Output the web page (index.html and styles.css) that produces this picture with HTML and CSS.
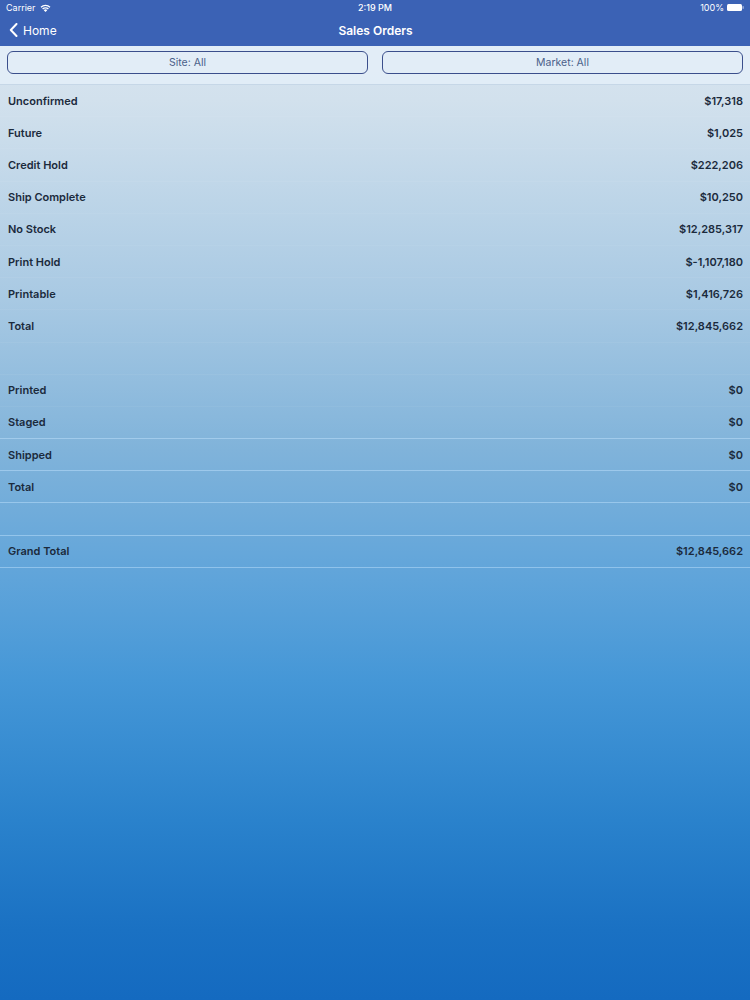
FILE: index.html
```html
<!doctype html>
<html lang="en">
  <head>
    <meta charset="UTF-8" />
    <meta name="viewport" content="width=device-width, initial-scale=1.0" />
    <title>Sales Orders</title>
    <link rel="stylesheet" href="styles.css">
  </head>
  <body>
    <div class="top-bar">
      <div class="status-bar">
        <div class="status-left">
          Carrier
          <svg class="wifi" width="11" height="8" viewBox="0 0 11 8">
            <path d="M5.5 8 L3.8 6.2 A2.4 2.4 0 0 1 7.2 6.2 Z" fill="#fff" />
            <path d="M2.6 5 A4.1 4.1 0 0 1 8.4 5" stroke="#fff" stroke-width="1.3" fill="none" />
            <path d="M1 3.3 A6.4 6.4 0 0 1 10 3.3" stroke="#fff" stroke-width="1.3" fill="none" />
          </svg>
        </div>
        <div class="status-time">2:19 PM</div>
        <div class="status-right">
          100%
          <svg class="battery" width="17" height="7" viewBox="0 0 17 7">
            <rect x="0" y="0" width="15" height="7" rx="1.5" fill="#fff" />
            <rect x="15.5" y="2.2" width="1.2" height="2.6" fill="#fff" opacity="0.6" />
          </svg>
        </div>
      </div>
      <div class="nav-bar">
        <div class="nav-back">
          <svg width="9" height="14" viewBox="0 0 9 14">
            <path d="M7.5 1 L1.8 7 L7.5 13" stroke="#fff" stroke-width="2" fill="none" stroke-linecap="round" stroke-linejoin="round" />
          </svg>
          <span>Home</span>
        </div>
        <div class="nav-title">Sales Orders</div>
        <div class="nav-spacer"></div>
      </div>
    </div>

    <div class="filter-bar">
      <button class="filter-button">Site: All</button>
      <button class="filter-button">Market: All</button>
    </div>

    <div class="order-list">
      <div class="order-row"><span>Unconfirmed</span><span>$17,318</span></div>
      <div class="order-row"><span>Future</span><span>$1,025</span></div>
      <div class="order-row"><span>Credit Hold</span><span>$222,206</span></div>
      <div class="order-row"><span>Ship Complete</span><span>$10,250</span></div>
      <div class="order-row"><span>No Stock</span><span>$12,285,317</span></div>
      <div class="order-row"><span>Print Hold</span><span>$-1,107,180</span></div>
      <div class="order-row"><span>Printable</span><span>$1,416,726</span></div>
      <div class="order-row"><span>Total</span><span>$12,845,662</span></div>
      <div class="order-row"></div>
      <div class="order-row"><span>Printed</span><span>$0</span></div>
      <div class="order-row"><span>Staged</span><span>$0</span></div>
      <div class="order-row"><span>Shipped</span><span>$0</span></div>
      <div class="order-row"><span>Total</span><span>$0</span></div>
      <div class="order-row"></div>
      <div class="order-row"><span>Grand Total</span><span>$12,845,662</span></div>
    </div>
  </body>
</html>
```

FILE: styles.css
```css
* {
  box-sizing: border-box;
  margin: 0;
  padding: 0;
  font-family: Inter, 'Liberation Sans', sans-serif;
}

html,
body {
  width: 750px;
  height: 1000px;
  overflow: hidden;
}

body {
  background: linear-gradient(
    to bottom,
    #dce7f1 0px,
    #d2e1ed 100px,
    #a8c9e3 300px,
    #80b3da 450px,
    #5fa4da 580px,
    #4597d7 680px,
    #2a82cc 820px,
    #1a71c3 930px,
    #146ac0 1000px
  );
  color: #1b2a3c;
}

.top-bar {
  background-color: #3b62b5;
  color: #fff;
}

.status-bar {
  height: 15px;
  display: flex;
  justify-content: space-between;
  align-items: center;
  padding: 0 6px;
  font-size: 9px;
}

.status-left,
.status-right {
  display: flex;
  align-items: center;
  gap: 4px;
  width: 80px;
}

.status-right {
  justify-content: flex-end;
  gap: 3px;
}

.status-time {
  font-weight: 500;
}

.nav-bar {
  height: 31px;
  display: flex;
  justify-content: space-between;
  align-items: center;
  padding: 0 8px 1px 9px;
}

.nav-back {
  display: flex;
  align-items: center;
  gap: 5px;
  font-size: 12px;
  width: 80px;
}

.nav-title {
  font-size: 12px;
  font-weight: 600;
}

.nav-spacer {
  width: 80px;
}

.filter-bar {
  height: 39px;
  display: flex;
  gap: 14px;
  padding: 5px 7px 0;
  background-color: rgba(230, 240, 250, 0.75);
  border-bottom: 1px solid rgba(180, 200, 220, 0.6);
}

.filter-button {
  flex: 1;
  height: 23px;
  border: 1.5px solid #3b4f8c;
  border-radius: 6px;
  background: transparent;
  color: #4a5f8a;
  font-size: 10.5px;
  font-family: Inter, 'Liberation Sans', sans-serif;
}

.order-list {
  display: flex;
  flex-direction: column;
}

.order-row {
  height: 32.2px;
  display: flex;
  justify-content: space-between;
  align-items: center;
  padding: 0 7px 0 8px;
  font-size: 11px;
  font-weight: 600;
  border-bottom: 1px solid rgba(255, 255, 255, 0.05);
}

.order-row:nth-child(n + 11) {
  border-bottom-color: rgba(200, 230, 255, 0.45);
}
```
